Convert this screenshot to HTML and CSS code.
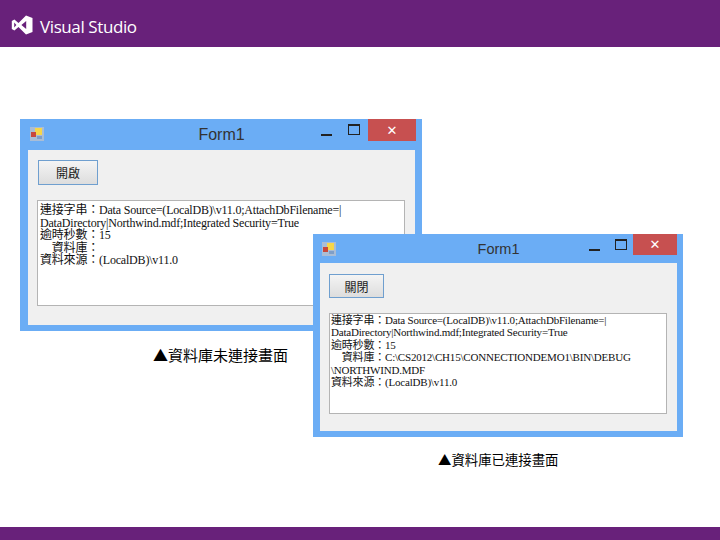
FILE: index.html
```html
<!DOCTYPE html>
<html lang="zh-Hant">
<head>
    <meta charset="UTF-8">
    <title>Visual Studio</title>
    <link rel="stylesheet" href="styles.css">
</head>
<body>

    <header class="top-bar">
        <svg class="vs-logo" width="22" height="20" viewBox="0 0 22 20">
            <path fill="#fff" d="M15 0.5 L21.5 3 V17 L15 19.5 L7.5 12 L3.4 15.4 L0.8 14 V6 L3.4 4.6 L7.5 8 Z M15.2 6 L10.4 10 L15.2 14 Z M3.2 7.6 V12.4 L5.4 10 Z"/>
        </svg>
        <span class="vs-name">Visual Studio</span>
    </header>

    <main class="canvas">
        <!-- not connected -->
        <div class="form-window win-one">
            <div class="title-bar">
                <svg class="app-icon" width="16" height="16" viewBox="0 0 16 16">
                    <rect x="1" y="1" width="14" height="14" fill="#a9bdd6"/>
                    <rect x="6" y="2" width="7" height="7" fill="#f6d64a"/>
                    <rect x="2" y="6" width="5" height="5" fill="#c8483c"/>
                    <rect x="8" y="10" width="5" height="3" fill="#7f9fc8"/>
                </svg>
                <span class="title-text">Form1</span>
                <span class="min-btn"></span>
                <span class="max-btn"></span>
                <span class="close-btn">✕</span>
            </div>
            <div class="client">
                <button class="form-btn">開啟</button>
                <div class="text-box">
                    <div>連接字串：Data Source=(LocalDB)\v11.0;AttachDbFilename=|</div>
                    <div>DataDirectory|Northwind.mdf;Integrated Security=True</div>
                    <div>逾時秒數：15</div>
                    <div>　資料庫：</div>
                    <div>資料來源：(LocalDB)\v11.0</div>
                </div>
            </div>
        </div>

        <p class="caption cap-one">▲資料庫未連接畫面</p>

        <!-- connected -->
        <div class="form-window win-two">
            <div class="title-bar">
                <svg class="app-icon" width="16" height="16" viewBox="0 0 16 16">
                    <rect x="1" y="1" width="14" height="14" fill="#a9bdd6"/>
                    <rect x="6" y="2" width="7" height="7" fill="#f6d64a"/>
                    <rect x="2" y="6" width="5" height="5" fill="#c8483c"/>
                    <rect x="8" y="10" width="5" height="3" fill="#7f9fc8"/>
                </svg>
                <span class="title-text">Form1</span>
                <span class="min-btn"></span>
                <span class="max-btn"></span>
                <span class="close-btn">✕</span>
            </div>
            <div class="client">
                <button class="form-btn">關閉</button>
                <div class="text-box">
                    <div>連接字串：Data Source=(LocalDB)\v11.0;AttachDbFilename=|</div>
                    <div>DataDirectory|Northwind.mdf;Integrated Security=True</div>
                    <div>逾時秒數：15</div>
                    <div>　資料庫：C:\CS2012\CH15\CONNECTIONDEMO1\BIN\DEBUG</div>
                    <div>\NORTHWIND.MDF</div>
                    <div>資料來源：(LocalDB)\v11.0</div>
                </div>
            </div>
        </div>

        <p class="caption cap-two">▲資料庫已連接畫面</p>
    </main>

    <footer class="bottom-bar"></footer>

</body>
</html>
```

FILE: styles.css
```css
body {
    margin: 0;
    width: 720px;
    height: 540px;
    display: flex;
    flex-direction: column;
    overflow: hidden;
    background: #fff;
    font-family: "Liberation Serif", "Noto Sans CJK TC", serif;
}

.top-bar {
    height: 47px;
    box-sizing: border-box;
    display: flex;
    align-items: center;
    gap: 7px;
    padding: 6px 0 0 11px;
    background-color: #68217a;
    color: #fff;
}

.vs-logo {
    margin-bottom: 4px;
}

.vs-name {
    font-family: "Open Sans", sans-serif;
    font-size: 17px;
    letter-spacing: -0.4px;
}

.canvas {
    flex: 1;
    position: relative;
}

.bottom-bar {
    height: 13px;
    background-color: #68217a;
}

/* the two windows sit freely on the slide */
.form-window {
    position: absolute;
    display: flex;
    flex-direction: column;
    box-sizing: border-box;
    background-color: #6badf5;
}

.win-one {
    left: 20px;
    top: 72px;
    width: 402px;
    height: 212px;
    padding: 0 7px 6px 8px;
}

.win-two {
    left: 313px;
    top: 187px;
    width: 370px;
    height: 203px;
    padding: 0 6px 6px 7px;
}

.title-bar {
    height: 31px;
    flex-shrink: 0;
    position: relative;
    display: flex;
    align-items: center;
    justify-content: center;
}

.win-two .title-bar {
    height: 29px;
}

.app-icon {
    position: absolute;
    left: 1px;
    top: 7px;
}

.title-text {
    font-family: "Liberation Sans", sans-serif;
    font-size: 16px;
    color: #333;
}

.win-two .title-text {
    font-size: 14.5px;
}

.min-btn {
    position: absolute;
    right: 83px;
    top: 15px;
    width: 11px;
    height: 2px;
    background-color: #222;
}

.max-btn {
    position: absolute;
    right: 55px;
    top: 5px;
    width: 10px;
    height: 8px;
    border: 1px solid #222;
    border-top-width: 2px;
}

.close-btn {
    position: absolute;
    right: -1px;
    top: 0;
    width: 48px;
    height: 22px;
    display: flex;
    align-items: center;
    justify-content: center;
    background-color: #c75050;
    color: #fff;
    font-family: "DejaVu Sans", sans-serif;
    font-size: 13px;
    font-weight: bold;
}

.win-two .close-btn {
    right: 0;
    width: 44px;
    height: 21px;
}

.win-two .min-btn {
    right: 77px;
}

.win-two .max-btn {
    right: 50px;
}

.client {
    flex: 1;
    display: flex;
    flex-direction: column;
    align-items: flex-start;
    background-color: #f0f0f0;
    padding: 10px 10px 0 9px;
}

.win-two .client {
    padding: 11px 10px 0 9px;
}

.form-btn {
    width: 60px;
    height: 25px;
    margin-left: 1px;
    padding: 0;
    border: 1px solid #6f9fcf;
    background: linear-gradient(#f4f4f4, #dddddd);
    font-family: "Noto Sans CJK TC", sans-serif;
    font-size: 12px;
    color: #222;
}

.win-two .form-btn {
    width: 55px;
    height: 24px;
    margin-left: 0;
}

.text-box {
    box-sizing: border-box;
    width: 368px;
    height: 106px;
    margin-top: 15px;
    padding: 3px 0 0 2px;
    background: #fff;
    border: 1px solid #b4b4b4;
    font-size: 12px;
    letter-spacing: -0.2px;
    line-height: 12.5px;
    color: #111;
    overflow: hidden;
}

.text-box div {
    white-space: pre;
}

.win-two .text-box {
    width: 338px;
    height: 101px;
    margin-top: 15px;
    padding: 0 0 0 1px;
    font-size: 11px;
    line-height: 12.4px;
}

.caption {
    position: absolute;
    margin: 0;
    font-family: "Noto Sans CJK TC", sans-serif;
    line-height: 16px;
    color: #000;
    white-space: nowrap;
}

.cap-one {
    left: 153px;
    top: 300px;
    font-size: 15px;
}

.cap-two {
    left: 438px;
    top: 404px;
    font-size: 13.4px;
}
```
